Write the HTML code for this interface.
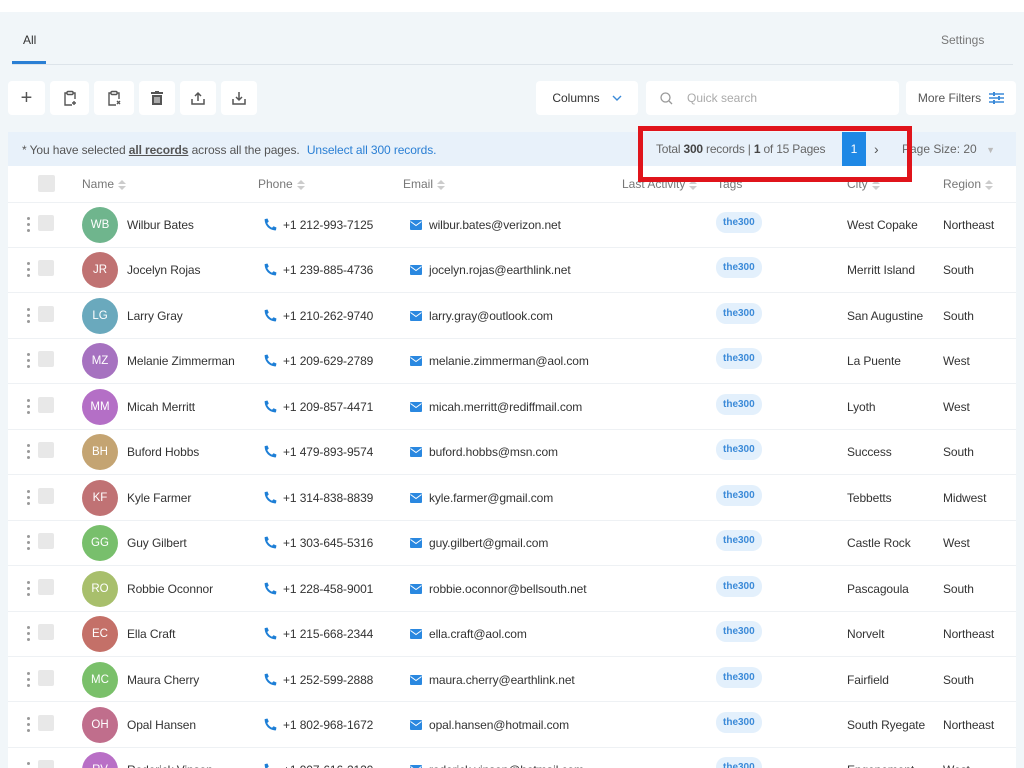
<!DOCTYPE html>
<html style="width:1024px;height:768px;overflow:hidden"><head><meta charset="utf-8"><style>
*{box-sizing:border-box;margin:0;padding:0}
body{width:1024px;height:768px;overflow:hidden;background:#f1f6f9;font-family:"Liberation Sans",Arial,sans-serif;font-size:12px;color:#333;position:relative}
.abs{position:absolute}
.top{left:0;top:0;width:1024px;height:12px;background:#fff}
.btn{position:absolute;top:81px;height:34px;background:#fff;border-radius:4px;display:flex;align-items:center;justify-content:center;color:#555}
.sel{left:8px;top:132px;width:1008px;height:34px;background:#e8f1fa}
.table{left:8px;top:166px;width:1008px;height:602px;background:#fff}
.row{position:absolute;left:8px;width:1008px;border-top:1px solid #eef1f4;height:46px}
.cell{position:absolute;top:50%;transform:translateY(-50%);white-space:nowrap;letter-spacing:-0.1px}
.av{position:absolute;left:74px;top:50%;width:36px;height:36px;margin-top:-18px;border-radius:50%;color:#fff;font-size:11.5px;display:flex;align-items:center;justify-content:center}
.cb{position:absolute;left:30px;width:16px;height:16px;background:#e8e8e8;border-radius:2px;top:50%;margin-top:-10px}
.dots{position:absolute;left:19px;top:50%;margin-top:-8px;width:3px}
.dots i{display:block;width:3px;height:3px;background:#999;border-radius:50%;margin-bottom:3px}
.tag{position:absolute;left:708px;top:50%;margin-top:-13px;background:#e3f0fc;color:#3b8ad8;font-size:10px;border-radius:10px;padding:5px 7px;font-weight:bold}
.hd{position:absolute;top:177px;color:#777;font-size:12px}
.sort{display:inline-block;width:8px;height:10px;vertical-align:middle;margin-left:4px;position:relative}
.sort:before{content:"";position:absolute;left:0;top:0;border:4px solid transparent;border-bottom:4px solid #ccc;border-top:0}
.sort:after{content:"";position:absolute;left:0;top:6px;border:4px solid transparent;border-top:4px solid #ccc;border-bottom:0}
</style></head><body>
<div class="abs top"></div>
<div class="abs" style="left:23px;top:33px;font-size:12px;color:#333">All</div>
<div class="abs" style="left:12px;top:61px;width:34px;height:3px;background:#2a7fd4"></div>
<div class="abs" style="left:12px;top:64px;width:1001px;height:1px;background:#dde4ea"></div>
<div class="abs" style="left:941px;top:33px;color:#777">Settings</div>

<div class="btn" style="left:8px;width:37px;font-size:20px;font-weight:300">+</div>
<div class="btn" style="left:50px;width:39px"><svg width="14" height="16" viewBox="0 0 14 16" fill="none" stroke="#555" stroke-width="1.4"><path d="M4 3H2v12h7M10 3h2v6"/><rect x="4" y="1.5" width="6" height="3" rx="1"/><path d="M11 11v4M9 13h4"/></svg></div>
<div class="btn" style="left:94px;width:40px"><svg width="14" height="16" viewBox="0 0 14 16" fill="none" stroke="#555" stroke-width="1.4"><path d="M4 3H2v12h7M10 3h2v6"/><rect x="4" y="1.5" width="6" height="3" rx="1"/><path d="M10 11l3 3M13 11l-3 3"/></svg></div>
<div class="btn" style="left:139px;width:36px"><svg width="12" height="14" viewBox="0 0 12 14" fill="#555"><rect x="0" y="1" width="12" height="2"/><rect x="4" y="0" width="4" height="2"/><path d="M1 4h10v10H1z"/><path d="M4 6v6M6 6v6M8 6v6" stroke="#fff" stroke-width="1"/></svg></div>
<div class="btn" style="left:180px;width:36px"><svg width="14" height="14" viewBox="0 0 14 14" fill="none" stroke="#555" stroke-width="1.5"><path d="M1 8v5h12V8M7 10V2M4 5l3-3 3 3"/></svg></div>
<div class="btn" style="left:221px;width:36px"><svg width="14" height="14" viewBox="0 0 14 14" fill="none" stroke="#555" stroke-width="1.5"><path d="M1 8v5h12V8M7 1v8M4 6l3 3 3-3"/></svg></div>

<div class="btn" style="left:536px;width:102px;color:#333;font-size:12px">Columns <svg style="margin-left:12px" width="10" height="6" viewBox="0 0 10 6" fill="none" stroke="#3b8ad8" stroke-width="1.4"><path d="M1 1l4 4 4-4"/></svg></div>
<div class="btn" style="left:646px;width:253px;justify-content:flex-start;padding-left:14px;color:#aaa"><svg width="13" height="13" viewBox="0 0 13 13" fill="none" stroke="#999" stroke-width="1.3"><circle cx="5.5" cy="5.5" r="4.5"/><path d="M9 9l3 3"/></svg><span style="margin-left:14px">Quick search</span></div>
<div class="btn" style="left:906px;width:110px;color:#555">More Filters <svg style="margin-left:8px" width="15" height="12" viewBox="0 0 15 12" stroke="#3b8ad8" stroke-width="1.5"><path d="M0 2h15M0 6h15M0 10h15"/><path d="M5 0v4M10 4v4M5 8v4" stroke-width="2"/></svg></div>

<div class="abs sel"></div>
<div class="abs" style="left:22px;top:143px;color:#555;letter-spacing:-0.1px">* You have selected <b style="text-decoration:underline">all records</b> across all the pages. <span style="color:#2a7fd4;margin-left:4px">Unselect all 300 records.</span></div>
<div class="abs" style="left:656px;top:142px;color:#666;letter-spacing:-0.2px">Total <b style="color:#444">300</b> records | <b style="color:#444">1</b> of 15 Pages</div>
<div class="abs" style="left:842px;top:132px;width:24px;height:34px;background:#1e88e5;color:#fff;display:flex;align-items:center;justify-content:center">1</div>
<div class="abs" style="left:874px;top:141px;color:#555;font-size:14px">›</div>
<div class="abs" style="left:902px;top:142px;color:#666">Page Size: 20 <span style="color:#bbb;font-size:9px;margin-left:6px">▼</span></div>
<div class="abs" style="left:638px;top:126px;width:274px;height:56px;border:5px solid #e0141b;z-index:5"></div>

<div class="abs table"></div>
<div class="abs" style="left:38px;top:175px;width:17px;height:17px;background:#e8e8e8;border-radius:2px"></div>
<div class="hd" style="left:82px">Name<span class="sort"></span></div>
<div class="hd" style="left:258px">Phone<span class="sort"></span></div>
<div class="hd" style="left:403px">Email<span class="sort"></span></div>
<div class="hd" style="left:622px">Last Activity<span class="sort"></span></div>
<div class="hd" style="left:717px">Tags</div>
<div class="hd" style="left:847px">City<span class="sort"></span></div>
<div class="hd" style="left:943px">Region<span class="sort"></span></div>

<div id="rows"></div>
<script>
var d=[["WB","#6fb58d","Wilbur Bates","+1 212-993-7125","wilbur.bates@verizon.net","West Copake","Northeast"],
["JR","#c07272","Jocelyn Rojas","+1 239-885-4736","jocelyn.rojas@earthlink.net","Merritt Island","South"],
["LG","#6aa9bd","Larry Gray","+1 210-262-9740","larry.gray@outlook.com","San Augustine","South"],
["MZ","#a672c0","Melanie Zimmerman","+1 209-629-2789","melanie.zimmerman@aol.com","La Puente","West"],
["MM","#b46fc6","Micah Merritt","+1 209-857-4471","micah.merritt@rediffmail.com","Lyoth","West"],
["BH","#c4a472","Buford Hobbs","+1 479-893-9574","buford.hobbs@msn.com","Success","South"],
["KF","#c07274","Kyle Farmer","+1 314-838-8839","kyle.farmer@gmail.com","Tebbetts","Midwest"],
["GG","#78bf6c","Guy Gilbert","+1 303-645-5316","guy.gilbert@gmail.com","Castle Rock","West"],
["RO","#a8bf6c","Robbie Oconnor","+1 228-458-9001","robbie.oconnor@bellsouth.net","Pascagoula","South"],
["EC","#c47068","Ella Craft","+1 215-668-2344","ella.craft@aol.com","Norvelt","Northeast"],
["MC","#7ac06a","Maura Cherry","+1 252-599-2888","maura.cherry@earthlink.net","Fairfield","South"],
["OH","#c06e8c","Opal Hansen","+1 802-968-1672","opal.hansen@hotmail.com","South Ryegate","Northeast"],
["RV","#b96fc6","Roderick Vinson","+1 907-616-2120","roderick.vinson@hotmail.com","Engenement","West"]];
var h="";
d.forEach(function(r,i){var t=201.5+i*45.45;
h+='<div class="row" style="top:'+t+'px"><div class="dots"><i></i><i></i><i></i></div><div class="cb"></div>'+
'<div class="av" style="background:'+r[1]+'">'+r[0]+'</div>'+
'<div class="cell" style="left:119px">'+r[2]+'</div>'+
'<div class="cell" style="left:256px"><svg width="13" height="13" viewBox="0 0 12 12" style="vertical-align:-2px;margin-right:6px"><path d="M11.5 8.8L8.8 7.6 7.4 9C5.4 8 4 6.6 3 4.6L4.4 3.2 3.2 0.5 0.6 1C0.6 7 5 11.4 11 11.4z" fill="#1e7fd6"/></svg>'+r[3]+'</div>'+
'<div class="cell" style="left:402px"><svg width="12" height="10" viewBox="0 0 12 10" style="vertical-align:-1px;margin-right:7px"><rect width="12" height="10" rx="1" fill="#2a88e0"/><path d="M0.5 1.5l5.5 4 5.5-4" fill="none" stroke="#fff" stroke-width="1"/></svg>'+r[4]+'</div>'+
'<div class="tag">the300</div>'+
'<div class="cell" style="left:839px">'+r[5]+'</div>'+
'<div class="cell" style="left:935px">'+r[6]+'</div></div>';});
document.getElementById("rows").innerHTML=h;
</script>
</body></html>
